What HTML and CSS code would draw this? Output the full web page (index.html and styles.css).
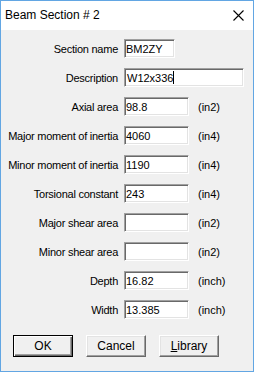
FILE: index.html
```html
<!DOCTYPE html>
<html lang="en">
<head>
    <meta charset="UTF-8">
    <title>Beam Section # 2</title>
    <link rel="stylesheet" href="styles.css">
</head>
<body>
<div class="window">
    <div class="titlebar">
        <span class="title">Beam Section # 2</span>
        <svg class="close" width="11" height="11" viewBox="0 0 11 11">
            <path d="M0.5 0.5 L10.5 10.5 M10.5 0.5 L0.5 10.5" stroke="#000" stroke-width="1.1"/>
        </svg>
    </div>

    <div class="form">
        <label class="lbl">Section name</label>
        <input class="edit short" type="text" value="BM2ZY"/>
        <span></span>

        <label class="lbl">Description</label>
        <div class="edit wide"><span>W12x336</span><span class="caret"></span></div>

        <label class="lbl">Axial area</label>
        <input class="edit" type="text" value="98.8"/>
        <span class="unit">(in2)</span>

        <label class="lbl">Major moment of inertia</label>
        <input class="edit" type="text" value="4060"/>
        <span class="unit">(in4)</span>

        <label class="lbl">Minor moment of inertia</label>
        <input class="edit" type="text" value="1190"/>
        <span class="unit">(in4)</span>

        <label class="lbl">Torsional constant</label>
        <input class="edit" type="text" value="243"/>
        <span class="unit">(in4)</span>

        <label class="lbl">Major shear area</label>
        <input class="edit" type="text" value=""/>
        <span class="unit">(in2)</span>

        <label class="lbl">Minor shear area</label>
        <input class="edit" type="text" value=""/>
        <span class="unit">(in2)</span>

        <label class="lbl">Depth</label>
        <input class="edit" type="text" value="16.82"/>
        <span class="unit">(inch)</span>

        <label class="lbl">Width</label>
        <input class="edit" type="text" value="13.385"/>
        <span class="unit">(inch)</span>
    </div>

    <div class="buttons">
        <button class="btn default">OK</button>
        <button class="btn">Cancel</button>
        <button class="btn"><u>L</u>ibrary</button>
    </div>
</div>
</body>
</html>
```

FILE: styles.css
```css
* {
    box-sizing: border-box;
    font-family: "Liberation Sans", Arial, sans-serif;
}

body {
    margin: 0;
}

.window {
    width: 254px;
    height: 372px;
    background: #f0f0f0;
    border: 1px solid #62a6e3;
    display: flex;
    flex-direction: column;
}

.titlebar {
    height: 29px;
    background: #fff;
    display: flex;
    align-items: center;
    justify-content: space-between;
    padding: 0 9px 2px 4px;
}

.title {
    font-size: 12px;
    color: #000;
}

.close {
    margin-top: 2px;
}

.form {
    display: grid;
    grid-template-columns: 117px 65px auto;
    grid-auto-rows: 19px;
    column-gap: 6px;
    row-gap: 10px;
    padding-top: 9px;
    align-items: center;
}

.lbl {
    font-size: 11px;
    letter-spacing: -0.25px;
    text-align: right;
    color: #000;
}

.unit {
    font-size: 11px;
    padding-left: 3px;
    color: #000;
}

.edit {
    height: 19px;
    width: 65px;
    margin: 0;
    padding: 0 0 0 1px;
    font-size: 11px;
    color: #000;
    background: #fff;
    border: 1px solid;
    border-color: #a0a0a0 #fff #fff #a0a0a0;
    box-shadow: inset 1px 1px #696969, inset -1px -1px #e3e3e3;
    outline: none;
}

.short {
    width: 51px;
}

.wide {
    width: 120px;
    grid-column: 2 / 4;
    display: flex;
    align-items: center;
    padding-left: 2px;
}

.caret {
    width: 1px;
    height: 13px;
    background: #000;
}

.buttons {
    display: flex;
    gap: 13px;
    padding: 16px 0 0 12px;
}

.btn {
    width: 60px;
    height: 22px;
    margin: 0;
    padding: 0;
    font-size: 12px;
    color: #000;
    background: #f0f0f0;
    border: 1px solid;
    border-color: #fff #696969 #696969 #fff;
    box-shadow: inset -1px -1px #a0a0a0, inset 1px 1px #e3e3e3;
}

.default {
    border: 1px solid #000;
    box-shadow: inset 1px 1px #fff, inset -1px -1px #696969, inset -2px -2px #a0a0a0;
}
```
